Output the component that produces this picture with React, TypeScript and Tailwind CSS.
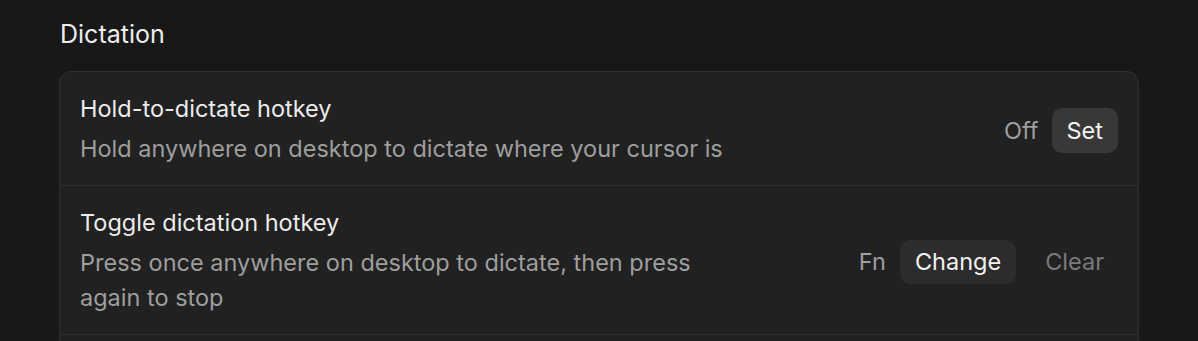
const font = { fontFamily: "Inter, 'Noto Sans', sans-serif" };

function Row({
  title,
  desc,
  children,
}: {
  title: string;
  desc: string;
  children: React.ReactNode;
}) {
  return (
    <div className="flex items-center justify-between gap-8 border-b border-[#2e2e2e] px-5 pt-[23px] pb-[19px]">
      <div className="flex max-w-[655px] flex-col gap-[8px]">
        <div className="text-[23.5px] leading-[28px] text-[#ececec]">{title}</div>
        <div className="text-[23.5px] leading-[35px] text-[#9e9e9e]">{desc}</div>
      </div>
      <div className="flex shrink-0 items-center">{children}</div>
    </div>
  );
}

export default function App() {
  return (
    <div className="h-screen w-full overflow-hidden bg-[#181818] px-[59px] pt-[18px]" style={font}>
      <h2 className="mb-[21px] pl-[1px] text-[25px] leading-[32px] text-[#ededed]">Dictation</h2>
      <div className="rounded-[12px] border border-[#2f2f2f] bg-[#212121]">
        <Row
          title="Hold-to-dictate hotkey"
          desc="Hold anywhere on desktop to dictate where your cursor is"
        >
          <span className="mr-[13px] text-[23.5px] text-[#9e9e9e]">Off</span>
          <button className="h-[45px] rounded-[10px] bg-[#383838] px-[15px] text-[23.5px] text-[#f2f2f2]">
            Set
          </button>
        </Row>
        <Row
          title="Toggle dictation hotkey"
          desc="Press once anywhere on desktop to dictate, then press again to stop"
        >
          <span className="mr-[14px] text-[23.5px] text-[#9e9e9e]">Fn</span>
          <button className="h-[44px] rounded-[10px] bg-[#2c2c2c] px-[15px] text-[23.5px] text-[#f2f2f2]">
            Change
          </button>
          <button className="ml-[15px] h-[44px] px-[14px] text-[23.5px] text-[#7a7a7a]">
            Clear
          </button>
        </Row>
        <div className="h-[60px]" />
      </div>
    </div>
  );
}
